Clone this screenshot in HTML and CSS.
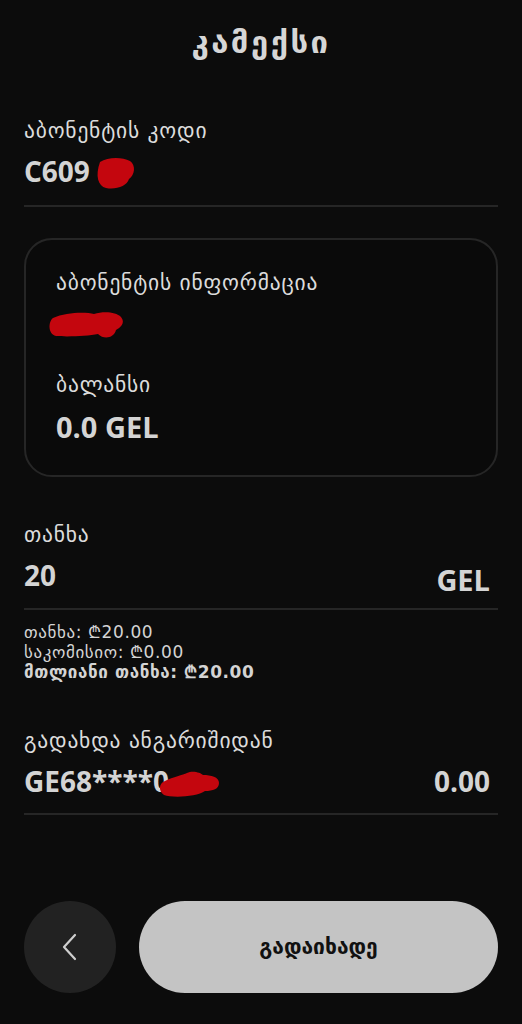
FILE: index.html
```
<!DOCTYPE html>
<html lang="ka">
<head>
  <meta charset="UTF-8">
  <title>კამექსი</title>
  <link rel="stylesheet" href="styles.css">
</head>
<body>
  <h1 class="title">კამექსი</h1>

  <div class="field code">
    <div class="label">აბონენტის კოდი</div>
    <div class="value masked">C609
      <svg class="scribble s1" width="42" height="34" viewBox="0 0 42 34"><path d="M6 6 C14 1 28 1 36 5 C42 9 41 19 35 23 C33 30 22 34 12 32 C4 30 1 20 6 6Z" fill="#c4060e"/></svg>
    </div>
  </div>

  <div class="card">
    <div class="label">აბონენტის ინფორმაცია</div>
    <div class="hidden-line">
      <svg width="78" height="32" viewBox="0 0 78 32"><path d="M5 10 C18 4 38 4 46 6 C56 3 68 4 73 9 C78 15 72 20 68 22 C66 30 56 32 50 26 C40 28 20 29 8 28 C0 26 0 14 5 10Z" fill="#c4060e"/></svg>
    </div>
    <div class="label gap">ბალანსი</div>
    <div class="value big">0.0 GEL</div>
  </div>

  <div class="field amount">
    <div class="label">თანხა</div>
    <div class="row">
      <span class="value">20</span>
      <span class="currency">GEL</span>
    </div>
  </div>

  <div class="summary">
    <div>თანხა: ₾20.00</div>
    <div>საკომისიო: ₾0.00</div>
    <div class="total">მთლიანი თანხა: ₾20.00</div>
  </div>

  <div class="field account">
    <div class="label">გადახდა ანგარიშიდან</div>
    <div class="row">
      <span class="value masked">GE68****0
        <svg class="scribble s2" width="62" height="28" viewBox="0 0 62 28"><path d="M7 11 C15 7 25 5 29 3 C35 0 43 3 45 5 C53 5 61 7 61 13 C61 19 55 21 47 21 C39 27 14 28 6 25 C0 21 1 13 7 11Z" fill="#c4060e"/></svg>
      </span>
      <span class="value">0.00</span>
    </div>
  </div>

  <div class="actions">
    <button class="back">
      <svg width="20" height="30" viewBox="0 0 20 30"><path d="M15 3 L4 15 L15 27" fill="none" stroke="#cfcfcf" stroke-width="2.2" stroke-linecap="round" stroke-linejoin="round"/></svg>
    </button>
    <button class="pay">გადაიხადე</button>
  </div>
</body>
</html>
```

FILE: styles.css
```
body {
  margin: 0;
  background-color: #0c0c0c;
  color: #d4d4d4;
  font-family: "Open Sans", "DejaVu Sans", sans-serif;
  width: 522px;
  height: 1024px;
  padding: 0 24px;
  box-sizing: border-box;
  display: flex;
  flex-direction: column;
}

.title {
  margin: 20px 0 0;
  font-family: "DejaVu Sans", sans-serif;
  font-size: 31px;
  font-weight: bold;
  letter-spacing: 2.5px;
  line-height: 44px;
  text-align: center;
  color: #d6d6d6;
}

.label {
  font-family: "DejaVu Sans", sans-serif;
  font-size: 21.5px;
  letter-spacing: 0.8px;
  line-height: 30px;
  color: #dcdcdc;
}

.value {
  font-size: 28px;
  font-weight: bold;
  line-height: 36px;
  color: #d4d4d4;
}

.field {
  border-bottom: 2px solid #262626;
}

.field .label {
  margin-bottom: 7px;
}

.code {
  margin-top: 52px;
  padding-bottom: 16px;
}

.masked {
  position: relative;
}

.scribble {
  position: absolute;
}

.s1 {
  left: 70px;
  top: 3px;
}

.s2 {
  left: 134px;
  top: 7px;
}

.card {
  margin-top: 31px;
  height: 239px;
  box-sizing: border-box;
  border: 2px solid #262626;
  border-radius: 28px;
  background-color: #0a0a0a;
  padding: 28px 30px 0;
}

.hidden-line {
  height: 32px;
  margin: 10px 0 0 -8px;
}

.label.gap {
  margin-top: 30px;
}

.value.big {
  margin-top: 8px;
  font-size: 29px;
  line-height: 38px;
}

.amount {
  margin-top: 43px;
  padding-bottom: 10px;
}

.row {
  display: flex;
  justify-content: space-between;
  align-items: flex-start;
}

.currency {
  margin: 5px 8px 0 0;
  font-size: 29px;
  font-weight: bold;
  line-height: 36px;
}

.summary {
  margin-top: 12px;
  font-family: "DejaVu Sans", sans-serif;
  font-size: 17px;
  letter-spacing: 0.6px;
  line-height: 20px;
}

.summary .total {
  font-weight: bold;
}

.account {
  margin-top: 44px;
  padding-bottom: 14px;
}

.account .value:last-child {
  margin-right: 8px;
}

.actions {
  margin-top: auto;
  margin-bottom: 31px;
  display: flex;
  gap: 23px;
}

.back {
  width: 92px;
  height: 92px;
  flex-shrink: 0;
  border: none;
  border-radius: 50%;
  background-color: #222;
  display: flex;
  align-items: center;
  justify-content: center;
}

.pay {
  flex: 1;
  height: 92px;
  border: none;
  border-radius: 46px;
  background-color: #c4c4c4;
  color: #111;
  font-family: "DejaVu Sans", sans-serif;
  font-size: 21px;
  font-weight: bold;
}
```
